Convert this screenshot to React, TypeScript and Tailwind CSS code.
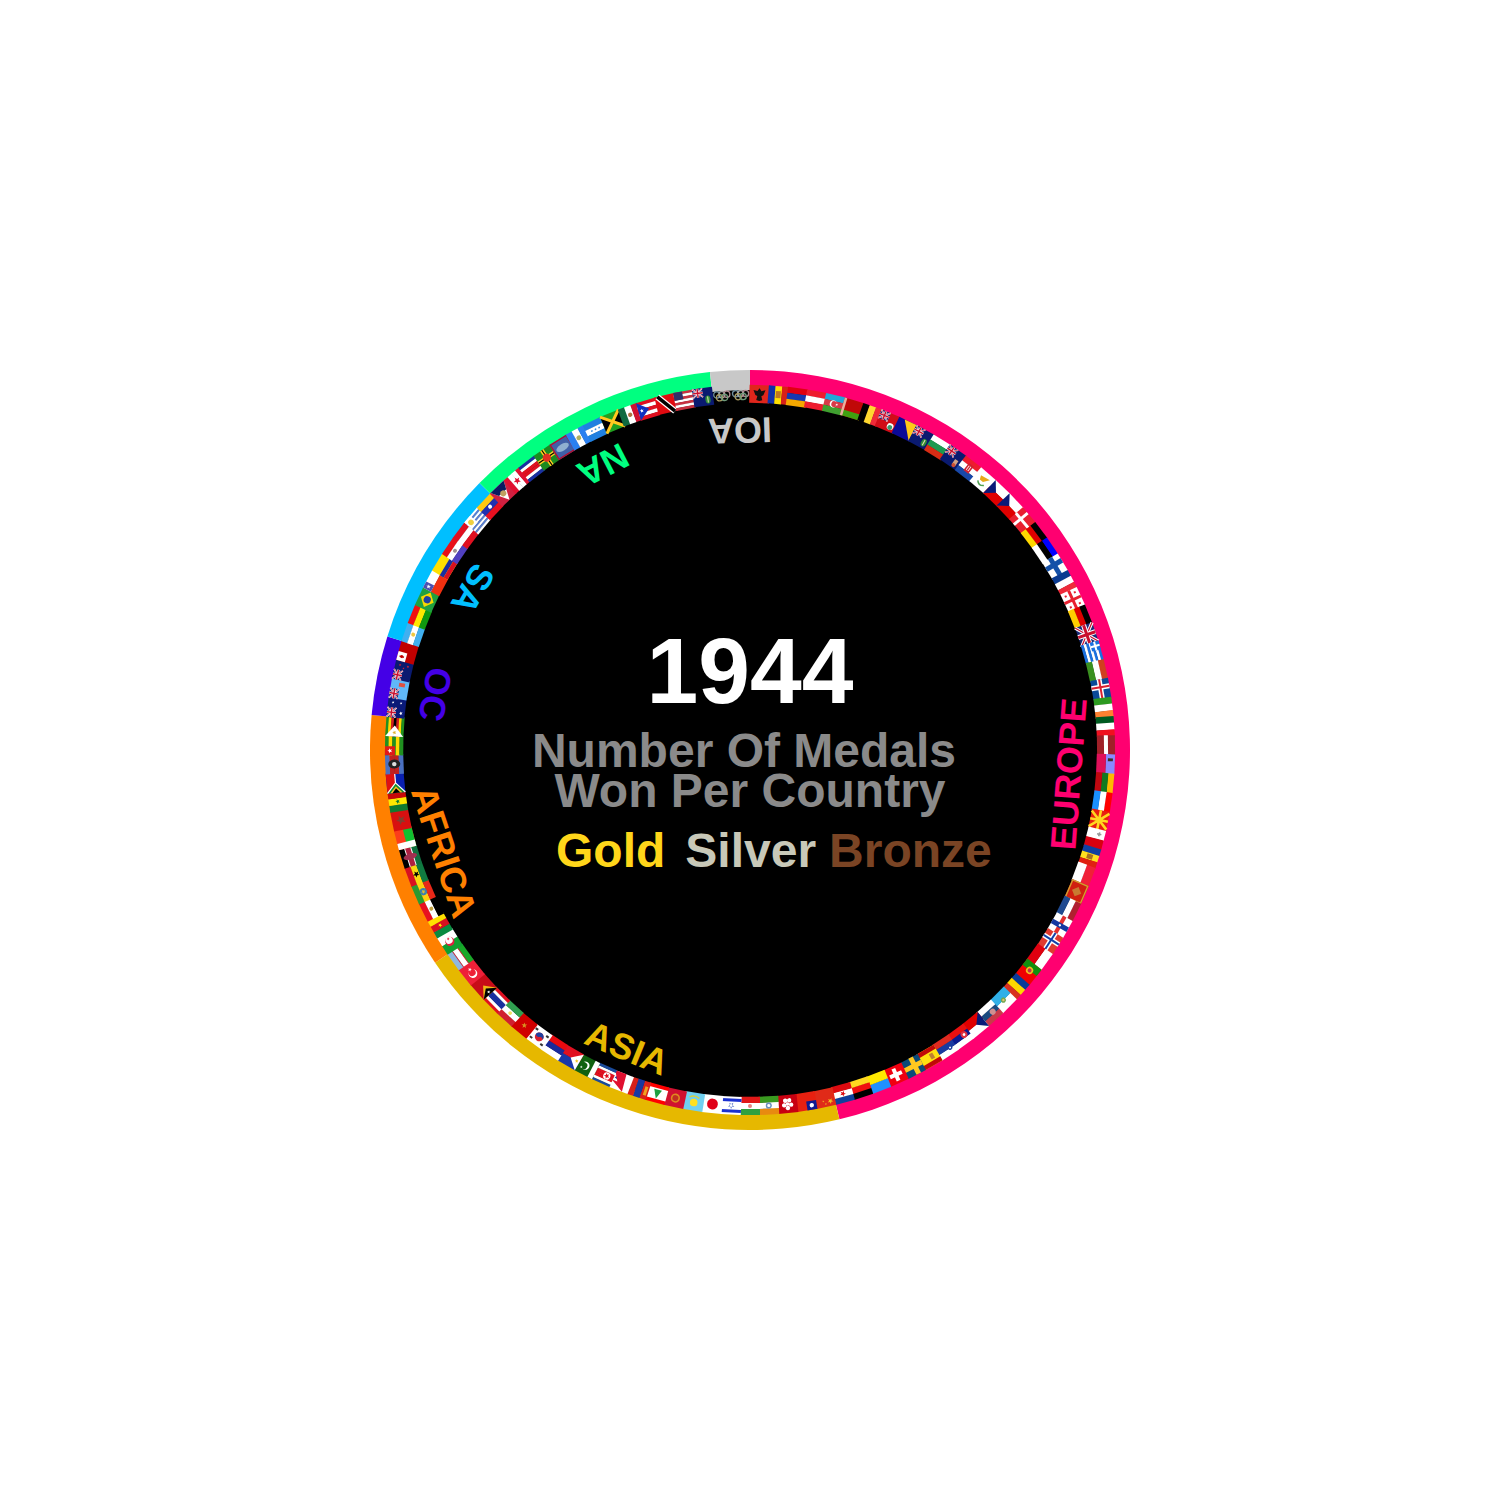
import type { ReactNode } from "react";

const W = 20;
const H = 18;
const CX = 750;
const CY = 750;
const STEP = 360 / 119;

// horizontal / vertical stripes, equal bands
function hs(...cs: string[]) {
  const h = H / cs.length;
  return cs.map((c, i) => <rect key={i} x={0} y={i * h} width={W} height={h + 0.3} fill={c} />);
}
function vs(...cs: string[]) {
  const w = W / cs.length;
  return cs.map((c, i) => <rect key={i} x={i * w} y={0} width={w + 0.3} height={H} fill={c} />);
}
const bg = (c: string) => <rect width={W} height={H} fill={c} />;
const dot = (x: number, y: number, r: number, c: string) => <circle cx={x} cy={y} r={r} fill={c} />;
const box = (x: number, y: number, w: number, h: number, c: string) => <rect x={x} y={y} width={w} height={h} fill={c} />;
const poly = (pts: string, c: string) => <polygon points={pts} fill={c} />;

function star(x: number, y: number, r: number, c: string) {
  const pts: string[] = [];
  for (let i = 0; i < 10; i++) {
    const a = (i * Math.PI) / 5 - Math.PI / 2;
    const q = i % 2 ? r * 0.42 : r;
    pts.push(`${x + q * Math.cos(a)},${y + q * Math.sin(a)}`);
  }
  return <polygon points={pts.join(" ")} fill={c} />;
}

function uj(w: number, h: number) {
  const s = h / 18;
  return (
    <g>
      <rect width={w} height={h} fill="#1a2a78" />
      <path d={`M0 0L${w} ${h}M${w} 0L0 ${h}`} stroke="#fff" strokeWidth={3.2 * s} />
      <path d={`M0 0L${w} ${h}M${w} 0L0 ${h}`} stroke="#c8102e" strokeWidth={1.2 * s} />
      <path d={`M${w / 2} 0V${h}M0 ${h / 2}H${w}`} stroke="#fff" strokeWidth={5 * s} />
      <path d={`M${w / 2} 0V${h}M0 ${h / 2}H${w}`} stroke="#c8102e" strokeWidth={3 * s} />
    </g>
  );
}

function cross(c1: string, c2: string | null, b: string) {
  return (
    <>
      {bg(b)}
      {box(0, 6.5, W, 5, c1)}
      {box(5.5, 0, 5, H, c1)}
      {c2 && box(0, 8, W, 2, c2)}
      {c2 && box(7, 0, 2, H, c2)}
    </>
  );
}

const ensign = (c: string, emblem: ReactNode) => (
  <>
    {bg(c)}
    {uj(10, 9)}
    {emblem}
  </>
);

const czech = (
  <>
    {hs("#fff", "#e00000")}
    {poly("0,0 9,9 0,18", "#0a1a78")}
  </>
);

const bvi = ensign("#0a1a70", (
  <>
    <ellipse cx={14.5} cy={12} rx={2.6} ry={4} fill="#2e8b3a" />
    {box(14, 9, 1, 6, "#e8e0b0")}
  </>
));

const EUROPE: ReactNode[] = [
  <>{bg("#e0261c")}<path d="M10 3L12 6L16 5L14 10L12 11L13 15L10 16L7 15L8 11L6 10L4 5L8 6Z" fill="#111" /></>,
  <>{vs("#1030a8", "#ffe000", "#d82018")}{box(7.5, 5, 5, 7, "#c07820")}</>,
  <>{hs("#e00010", "#1838b0", "#f5a800")}</>,
  <>{hs("#ee1c2e", "#fff", "#ee1c2e")}</>,
  <>{hs("#20a8d8", "#d83a48", "#40a030")}{dot(9.5, 9, 3.6, "#fff")}{dot(10.5, 9, 3, "#d83a48")}{star(13, 9, 1.5, "#fff")}</>,
  <>{bg("#c00808")}{box(0, 12, W, 6, "#40a010")}{box(0, 0, 2.5, H, "#e8b0a0")}</>,
  <>{vs("#000", "#ffd830", "#f02a38")}</>,
  <>{ensign("#d00c18", <>{dot(14.5, 12.5, 3.4, "#fff")}{dot(14.5, 13.5, 2.4, "#3a9a70")}</>)}</>,
  <>{bg("#0a0a98")}{poly("6,0 19,0 19,18", "#ffc81a")}</>,
  bvi,
  <>{hs("#fff", "#1c9a50", "#d82c14")}</>,
  ensign("#0a1a70", <>{box(12.5, 9, 4, 6, "#d0a080")}{dot(14.5, 15, 2, "#d05030")}</>),
  <>{hs("#ee1c2e", "#fff", "#1848a8")}{box(7, 4, 6, 9, "#d02030")}{box(8.5, 6, 3, 5, "#fff")}{box(9.3, 6, 1.4, 5, "#d02030")}</>,
  <>{bg("#fff")}{poly("5,6 15,4 11,10 7,10", "#e8a818")}<path d="M6 12Q10 16 14 12" stroke="#50a050" strokeWidth={1.5} fill="none" /></>,
  czech,
  czech,
  <>{bg("#e82030")}{box(0, 7.5, W, 3, "#fff")}{box(6, 0, 3, H, "#fff")}</>,
  <>{hs("#000", "#e00000", "#ffd800")}</>,
  <>{hs("#0000ff", "#000", "#fff")}</>,
  cross("#1450a8", null, "#fff"),
  <>{vs("#0a3a90", "#fff", "#ee2a3a")}</>,
  <>{bg("#fff")}{box(0, 7.5, W, 3, "#e82030")}{box(8.5, 0, 3, H, "#e82030")}{box(3, 3, 2, 2, "#e82030")}{box(15, 3, 2, 2, "#e82030")}{box(3, 13, 2, 2, "#e82030")}{box(15, 13, 2, 2, "#e82030")}</>,
  <>{hs("#000", "#dd0000", "#ffce00")}</>,
  uj(W, H),
  <>{hs("#1a70e0", "#fff", "#1a70e0", "#fff", "#1a70e0", "#fff", "#1a70e0")}{box(0, 0, 9, 9, "#1a70e0")}{box(0, 3.5, 9, 2, "#fff")}{box(3.5, 0, 2, 9, "#fff")}</>,
  <>{hs("#d04020", "#fff", "#3a9020")}</>,
  cross("#fff", "#d82030", "#0a4a98"),
  <>{vs("#2c9a20", "#fff", "#ff8030")}</>,
  <>{vs("#005a20", "#fff", "#f01020")}</>,
  <>{bg("#a02028")}{box(0, 7, W, 4, "#fff")}</>,
  <>{hs("#8a8aff", "#e0105a")}{box(4, 2, 3, 5, "#403020")}</>,
  <>{hs("#ffb800", "#107a20", "#c00810")}</>,
  <>{hs("#ff0000", "#fff", "#1a90ff")}</>,
  <>{bg("#e82010")}<path d="M10 9L2 0M10 9L10 0M10 9L18 0M10 9L0 9M10 9L20 9M10 9L2 18M10 9L10 18M10 9L18 18" stroke="#ffd820" strokeWidth={2.6} />{dot(10, 9, 2.6, "#ffd820")}</>,
  <>{vs("#fff", "#d80010")}{box(3, 5, 4, 1.6, "#999")}{box(4.2, 3.6, 1.6, 4.4, "#999")}</>,
  <>{vs("#1040a0", "#ffe020", "#e02010")}{box(7.5, 6, 5, 6, "#a87020")}</>,
  <>{hs("#f02038", "#fff")}</>,
  <>{bg("#d02010")}<rect x={0.8} y={0.8} width={18.4} height={16.4} fill="none" stroke="#d0a030" strokeWidth={1.4} />{poly("10,4 15,9 10,14 5,9", "#c87a30")}</>,
  <>{hs("#b02030", "#fff", "#204a90")}</>,
  <>{bg("#fff")}{box(0, 7, W, 4, "#e03030")}{box(7.5, 0, 5, H, "#1438a0")}{dot(10, 9, 1.2, "#fff")}</>,
  cross("#fff", "#1040a8", "#e03a30"),
  <>{hs("#fff", "#e00010")}</>,
  <>{bg("#f00000")}{box(0, 0, 8, H, "#109010")}{dot(8, 9, 3.6, "#f0c020")}{dot(8, 9, 2, "#c03050")}</>,
  <>{vs("#0a3a98", "#ffd800", "#d83020")}</>,
  <>{hs("#fff", "#30b0e8")}{dot(10, 9, 2.6, "#70a850")}{dot(10, 9, 1.2, "#e8c070")}</>,
  <>{hs("#c83a48", "#1a4a80", "#fff")}{dot(7, 8, 3, "#d09090")}</>,
  czech,
  <>{hs("#fff", "#0a1a90", "#e81010")}{dot(6, 9, 3.4, "#e03040")}{dot(6, 9, 1.4, "#fff")}</>,
  <>{hs("#fff", "#1a3aa0", "#e02a20")}{dot(6, 6.5, 2.4, "#1a3aa0")}{dot(6, 6.5, 1, "#fff")}</>,
  <>{bg("#ffe010")}{box(0, 0, W, 4.5, "#c00808")}{box(0, 13.5, W, 4.5, "#c00808")}{box(5, 6, 4, 6, "#c08030")}</>,
  cross("#ffc820", null, "#0a4a78"),
  <>{bg("#f00010")}{box(3.5, 7, 13, 4, "#fff")}{box(8, 2.5, 4, 13, "#fff")}</>,
  <>{hs("#2090ff", "#ffe800")}</>,
  <>{hs("#000", "#f01010", "#ffd820")}</>,
  <>{hs("#10409c", "#fff", "#dd0a10")}{star(10, 9, 3, "#dd0a10")}</>,
];

const ASIA: ReactNode[] = [
  <>{bg("#e02a18")}{star(5, 5, 3, "#f0c020")}{star(10, 3, 1.1, "#f0c020")}{star(12, 6, 1.1, "#f0c020")}</>,
  <>{bg("#e82010")}{box(0, 0, 10, 9, "#101a90")}{dot(5, 4.5, 2.2, "#fff")}</>,
  <>{bg("#c80010")}{dot(10, 9, 1.8, "#fff")}{dot(10, 5, 2.2, "#fff")}{dot(6.5, 8, 2.2, "#fff")}{dot(13.5, 8, 2.2, "#fff")}{dot(8, 12.5, 2.2, "#fff")}{dot(12, 12.5, 2.2, "#fff")}</>,
  <>{hs("#e88a10", "#fff", "#3a9a20")}{dot(10, 9, 3, "#6a90c0")}{dot(10, 9, 1.6, "#fff")}</>,
  <>{hs("#30a040", "#fff", "#e01818")}{dot(10, 9, 2, "#e88080")}</>,
  <>{bg("#fff")}{box(0, 2, W, 3, "#1a30d0")}{box(0, 13, W, 3, "#1a30d0")}{star(10, 9, 3.4, "#5070c8")}{dot(10, 9, 1.4, "#fff")}</>,
  <>{bg("#fff")}{dot(10, 9, 5.4, "#e00018")}</>,
  <>{bg("#70d0f0")}{dot(10, 8, 3.8, "#ffe020")}<path d="M5 13Q10 16 15 13" stroke="#d8d040" strokeWidth={1.4} fill="none" /></>,
  <>{bg("#d01030")}{dot(10, 9, 4.6, "#e08a20")}{dot(10, 9, 3, "#c03020")}</>,
  <>{bg("#ff0000")}{box(0, 3.5, W, 11, "#fff")}{poly("10,4 14,13 6,13", "#20a040")}</>,
  <>{vs("#d82018", "#1838a0", "#d82018")}{box(1.5, 4, 3, 9, "#f0a020")}</>,
  <>{bg("#fff")}{poly("12,18 12,9 18,11", "#1838a0")}{poly("6,0 20,8 14,8 20,18 8,18", "#e01030")}</>,
  <>{hs("#1a4a9a", "#fff", "#e01020", "#e01020", "#e01020", "#fff", "#1a4a9a")}{dot(7, 9, 3.6, "#fff")}{star(7, 9, 3, "#e01020")}</>,
  <>{bg("#106010")}{box(0, 0, 5, H, "#fff")}{dot(12, 9, 4.2, "#fff")}{dot(13.4, 8.3, 3.6, "#106010")}{star(15, 6, 1.4, "#fff")}</>,
  <>{hs("#1838a8", "#e01020")}{poly("0,0 10,9 0,18", "#fff")}{star(3, 9, 2, "#f0c820")}</>,
  <>{hs("#fff", "#1a2a9a", "#e80a10")}</>,
  <>{bg("#fff")}{dot(10, 9, 4.4, "#d82030")}<path d="M5.6 9A4.4 4.4 0 0 0 14.4 9Q12 7 10 9T5.6 9" fill="#2040a0" />{box(2, 3, 3, 2, "#333")}{box(15, 3, 3, 2, "#333")}{box(2, 13, 3, 2, "#333")}{box(15, 13, 3, 2, "#333")}</>,
  <>{bg("#d00000")}{star(10, 9, 3, "#d89020")}</>,
  <>{hs("#d02030", "#fff", "#30a050")}{dot(10, 9, 1.8, "#f0e060")}</>,
  <>{hs("#e01020", "#fff", "#1a30a0", "#1a30a0", "#fff", "#e01020")}</>,
  <>{bg("#c80c18")}{poly("0,0 11,9 0,18", "#f0b818")}{poly("0,0 7,9 0,18", "#000")}{star(2.5, 9, 1.8, "#fff")}</>,
  <>{bg("#ee2038")}{dot(8, 9, 4.4, "#fff")}{dot(9.4, 9, 3.6, "#ee2038")}{star(13, 9, 2, "#fff")}</>,
  <>{hs("#8fb8e0", "#fff", "#18a828")}{box(0, 5.4, W, 0.8, "#d02030")}{box(0, 11.6, W, 0.8, "#d02030")}</>,
];

const AFRICA: ReactNode[] = [
  <>{vs("#10a030", "#fff")}{dot(10, 9, 4.6, "#e02040")}{dot(11.4, 9, 3.6, "#fff")}{star(13, 9, 1.6, "#e02040")}</>,
  <>{vs("#0a8a40", "#d81020", "#ffe000")}{star(10, 9, 2.2, "#ffe000")}</>,
  <>{hs("#e81020", "#fff", "#000")}{dot(10, 9, 2, "#c0a040")}</>,
  <>{hs("#2a9a30", "#ffd010", "#e82818")}{dot(10, 9, 3.6, "#3a80b0")}{star(10, 9, 2.4, "#e0c030")}</>,
  <>{hs("#d81020", "#f8d810", "#107a40")}{star(10, 9, 3.4, "#000")}</>,
  <>{hs("#000", "#b02040", "#107040")}{box(0, 5.4, W, 1, "#fff")}{box(0, 11.6, W, 1, "#fff")}<ellipse cx={10} cy={9} rx={3} ry={7} fill="#a03050" /></>,
  <>{bg("#fc3d1a")}{box(0, 9, W, 9, "#10c030")}{box(0, 0, 6.5, H, "#fff")}</>,
  <>{bg("#d81010")}{star(10, 9, 5, "#804030")}</>,
  <>{vs("#107a30", "#ffe800", "#c80808")}{star(10, 9, 2.4, "#107a30")}</>,
  <>{bg("#0a20b0")}{box(0, 0, W, 9, "#e01010")}{poly("0,0 10,9 0,18", "#108a30")}<path d="M0 0L10 9L20 9M0 18L10 9" stroke="#fff" strokeWidth={1.2} fill="none" />{poly("0,3 6.5,9 0,15", "#ffc020")}{poly("0,5 4.5,9 0,13", "#000")}</>,
  <>{hs("#4a70c0", "#c02020", "#c02020", "#4a70c0")}<ellipse cx={10} cy={9} rx={4.5} ry={6} fill="#222" />{dot(10, 9, 2.2, "#ddd")}</>,
  <>{hs("#209020", "#ffd800", "#209020", "#ffd800", "#209020")}{box(0, 0, 9, 10, "#e01818")}{star(4.5, 5, 2.6, "#fff")}</>,
  <>{hs("#209020", "#ffd800", "#d02020", "#000", "#d02020", "#ffd800", "#209020")}{poly("0,0 11,9 0,18", "#fff")}{star(4, 9, 2.2, "#e0b030")}</>,
];

const OCEANIA: ReactNode[] = [
  ensign("#0a1a78", <>{star(5, 14, 2, "#fff")}{star(15, 5, 1.4, "#fff")}{star(15, 13, 1.4, "#fff")}</>),
  ensign("#60b8f8", <>{box(12.5, 8, 4, 6, "#e05040")}</>),
  ensign("#0a1a70", <>{star(15, 5, 1.4, "#e02030")}{star(15, 13, 1.4, "#e02030")}{star(12.5, 9, 1.2, "#e02030")}</>),
  <>{bg("#c00000")}{box(0, 0, 9, 9, "#fff")}{box(3, 3.5, 3, 2, "#c00000")}{box(3.8, 2.2, 1.4, 4.6, "#c00000")}</>,
];

const SOUTH: ReactNode[] = [
  <>{hs("#40b0f0", "#fff", "#40b0f0")}{dot(10, 9, 2, "#f0c840")}</>,
  <>{hs("#f01010", "#ffe800", "#109a10")}</>,
  <>{bg("#20a040")}{poly("10,2 18,9 10,16 2,9", "#f8d800")}{dot(10, 9, 3.6, "#2040a0")}</>,
  <>{hs("#fff", "#f03010")}{box(0, 0, 7, 9, "#4a50b0")}{star(3.5, 4.5, 2.4, "#fff")}</>,
  <>{bg("#ffe000")}{box(0, 9, W, 4.5, "#1a30a0")}{box(0, 13.5, W, 4.5, "#d81020")}</>,
  <>{hs("#e81018", "#fff", "#5040c0")}{dot(10, 9, 2, "#a09090")}</>,
  <>{hs("#e01020", "#fff", "#e01020")}</>,
  <>{hs("#fff", "#5a80d0", "#fff", "#5a80d0", "#fff", "#5a80d0", "#fff", "#5a80d0", "#fff")}{box(0, 0, 9, 10, "#fff")}{dot(4.5, 5, 2.8, "#f0d040")}</>,
  <>{hs("#ffc810", "#2030b0", "#e81020")}{dot(10, 9, 2, "#fff")}</>,
];

const NORTH: ReactNode[] = [
  <>{bg("#d02040")}{poly("1,0 19,0 10,18", "#fff")}{poly("1,0 19,0 15,8 5,8", "#0a1a60")}{dot(10, 9, 3, "#c0a060")}</>,
  <>{vs("#e01030", "#fff", "#fff", "#e01030")}{star(10, 9, 3.8, "#e01030")}</>,
  <>{hs("#1a30a0", "#fff", "#e01020", "#e01020", "#fff", "#1a30a0")}</>,
  <>{bg("#1a8a20")}{box(0, 7, W, 4, "#ffd020")}{box(8, 0, 4, H, "#ffd020")}{box(0, 8.4, W, 1.2, "#000")}{box(9.4, 0, 1.2, H, "#000")}{dot(10, 9, 4, "#e03020")}</>,
  <>{bg("#4060a8")}<rect x={0.7} y={0.7} width={18.6} height={16.6} fill="none" stroke="#b01030" strokeWidth={1.4} /><ellipse cx={10} cy={9} rx={7} ry={3.4} fill="#90b0d0" /></>,
  <>{vs("#2a80f0", "#fff", "#2a80f0")}{dot(10, 9, 2.4, "#b0b060")}</>,
  <>{hs("#2080e0", "#fff", "#2080e0")}{dot(6, 9, 0.9, "#4090e0")}{dot(10, 9, 0.9, "#4090e0")}{dot(14, 9, 0.9, "#4090e0")}</>,
  <>{bg("#20a020")}{poly("0,0 10,9 0,18", "#000")}{poly("20,0 10,9 20,18", "#000")}<path d="M0 0L20 18M20 0L0 18" stroke="#ffc820" strokeWidth={3} /></>,
  <>{vs("#106a40", "#fff", "#d01030")}{dot(10, 9, 2.2, "#b07040")}</>,
  <>{hs("#e01020", "#fff", "#e01020", "#fff", "#e01020")}{poly("0,0 11,9 0,18", "#1030c0")}{star(3.5, 9, 2.2, "#fff")}</>,
  <>{bg("#e00a10")}<path d="M3 0L17 18" stroke="#fff" strokeWidth={6} /><path d="M3 0L17 18" stroke="#000" strokeWidth={3.6} /></>,
  <>{hs("#c83040", "#fff", "#c83040", "#fff", "#c83040", "#fff", "#c83040")}{box(0, 0, 9, 8, "#30306a")}</>,
  bvi,
];

const rings = (
  <g fill="none" strokeWidth={1.3}>
    <circle cx={5} cy={8.5} r={3.1} stroke="#6f8f9f" />
    <circle cx={10} cy={8.5} r={3.1} stroke="#a8a8a8" />
    <circle cx={15} cy={8.5} r={3.1} stroke="#b08a90" />
    <circle cx={7.5} cy={11.5} r={3.1} stroke="#a89a60" />
    <circle cx={12.5} cy={11.5} r={3.1} stroke="#6f9a7a" />
  </g>
);

const FLAGS = [...EUROPE, ...ASIA, ...AFRICA, ...OCEANIA, ...SOUTH, ...NORTH, rings, rings];

const SECTORS = [
  { n: 55, color: "#ff0070" },
  { n: 23, color: "#e6b800" },
  { n: 13, color: "#ff8000" },
  { n: 4, color: "#4400e6" },
  { n: 9, color: "#00bfff" },
  { n: 13, color: "#00ff80" },
  { n: 2, color: "#c8c8c8" },
];

const LABELS = [
  { text: "EUROPE", angle: 94.3, r: 332, color: "#ff0070" },
  { text: "ASIA", angle: 202.4, r: 335, color: "#e6b800" },
  { text: "AFRICA", angle: 251.6, r: 335, color: "#ff8000" },
  { text: "OC", angle: 280, r: 332, color: "#4400e6" },
  { text: "SA", angle: 300.2, r: 333, color: "#00bfff" },
  { text: "NA", angle: 332.7, r: 333, color: "#00ff80" },
  { text: "IOA", angle: 358.2, r: 332, color: "#c8c8c8" },
];

function pt(deg: number, r: number) {
  const a = (deg * Math.PI) / 180;
  return `${CX + r * Math.sin(a)} ${CY - r * Math.cos(a)}`;
}

function sector(from: number, to: number) {
  const large = to - from > 180 ? 1 : 0;
  return `M${CX} ${CY}L${pt(from, 380)}A380 380 0 ${large} 1 ${pt(to, 380)}Z`;
}

function Ring() {
  let at = 0;
  return (
    <svg viewBox="370 370 760 760" className="w-[760px] h-[760px]">
      {SECTORS.map((s) => {
        const from = at * STEP;
        at += s.n;
        return <path key={s.color} d={sector(from, at * STEP)} fill={s.color} />;
      })}
      <circle cx={CX} cy={CY} r={360} fill="#000" />
      {FLAGS.map((f, i) => (
        <g key={i} transform={`rotate(${(i + 0.5) * STEP} ${CX} ${CY}) translate(${CX - W / 2} 385)`}>
          {f}
        </g>
      ))}
      {LABELS.map((l) => (
        <text
          key={l.text}
          transform={`translate(${CX} ${CY}) rotate(${l.angle}) translate(0 ${-l.r}) rotate(180)`}
          textAnchor="middle"
          fill={l.color}
          className="text-[36px] font-bold"
          style={{ fontFamily: "'Liberation Sans', Arial, sans-serif" }}
        >
          {l.text}
        </text>
      ))}
    </svg>
  );
}

export default function App() {
  return (
    <div className="h-[1500px] bg-white flex items-center justify-center font-['Liberation_Sans',Arial,sans-serif] font-bold">
      <div className="relative w-[760px] h-[760px]">
        <Ring />
        <div className="absolute inset-0 flex flex-col items-center pt-[253px]">
          <div className="text-[93px] leading-[96px] text-white">1944</div>
          <div className="mt-[12px] text-[48px] leading-[40px] text-[#8a8a8a] text-center">
            <div className="-ml-[12px]">Number Of Medals</div>
            <div>Won Per Country</div>
          </div>
          <div className="mt-[20px] self-start ml-[186px] flex text-[48px] leading-[40px]">
            <span className="text-[#ffd61a]">Gold</span>
            <span className="ml-[20px] text-[#c8c8b8]">Silver</span>
            <span className="ml-[13px] text-[#7a4424]">Bronze</span>
          </div>
        </div>
      </div>
    </div>
  );
}
